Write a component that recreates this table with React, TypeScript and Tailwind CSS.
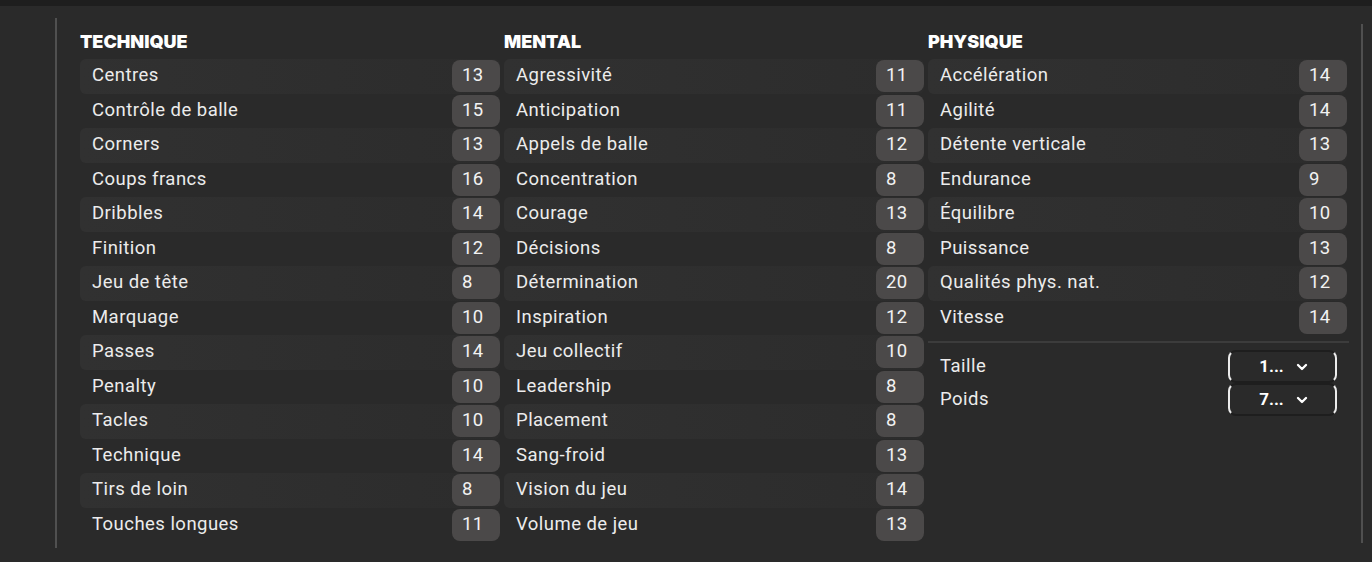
import React from 'react'
import { ChevronDown } from 'lucide-react'

type Attr = [string, number]

const technique: Attr[] = [
  ['Centres', 13],
  ['Contrôle de balle', 15],
  ['Corners', 13],
  ['Coups francs', 16],
  ['Dribbles', 14],
  ['Finition', 12],
  ['Jeu de tête', 8],
  ['Marquage', 10],
  ['Passes', 14],
  ['Penalty', 10],
  ['Tacles', 10],
  ['Technique', 14],
  ['Tirs de loin', 8],
  ['Touches longues', 11],
]

const mental: Attr[] = [
  ['Agressivité', 11],
  ['Anticipation', 11],
  ['Appels de balle', 12],
  ['Concentration', 8],
  ['Courage', 13],
  ['Décisions', 8],
  ['Détermination', 20],
  ['Inspiration', 12],
  ['Jeu collectif', 10],
  ['Leadership', 8],
  ['Placement', 8],
  ['Sang-froid', 13],
  ['Vision du jeu', 14],
  ['Volume de jeu', 13],
]

const physique: Attr[] = [
  ['Accélération', 14],
  ['Agilité', 14],
  ['Détente verticale', 13],
  ['Endurance', 9],
  ['Équilibre', 10],
  ['Puissance', 13],
  ['Qualités phys. nat.', 12],
  ['Vitesse', 14],
]

const Row = ({ label, value, odd }: { label: string; value: number; odd: boolean }) => (
  <div
    className={`flex items-center h-[34.5px] rounded-md ${
      odd ? 'bg-gradient-to-r from-[#313131] to-[#2c2c2c]' : ''
    }`}
  >
    <span className="flex-1 pl-3 text-[18.5px] tracking-[0.025em] text-[#ececec]">{label}</span>
    <span className="w-12 h-8 rounded-lg bg-[#4b4949] flex items-center pl-2.5 text-[18.5px] tracking-[0.02em] text-[#f2f2f2]">
      {value}
    </span>
  </div>
)

const Header = ({ title }: { title: string }) => (
  <div className="h-[25px] mb-[5px] flex items-center text-[18px] font-black text-white font-['Inter',sans-serif]">
    {title}
  </div>
)

const Column = ({ title, items }: { title: string; items: Attr[] }) => (
  <div className="flex flex-col">
    <Header title={title} />
    {items.map(([label, value], i) => (
      <Row key={label} label={label} value={value} odd={i % 2 === 0} />
    ))}
  </div>
)

const Select = ({ value }: { value: string }) => (
  <div className="w-[109px] h-[33px] rounded-lg border-2 border-x-[#ececec] border-y-[#1e1e1e] flex items-center justify-center gap-2.5 pl-1">
    <span className="text-[17px] font-bold text-white">{value}</span>
    <ChevronDown size={16} strokeWidth={3.5} className="text-white" />
  </div>
)

const App = () => {
  return (
    <div className="w-[1372px] h-[562px] bg-[#2a2a2a] flex flex-col font-['Roboto',sans-serif] overflow-hidden">
      <div className="h-[6px] bg-[#1e1e1e]" />
      <div className="flex flex-1">
        <div className="ml-[55px] mt-[12px] w-[2px] h-[530px] bg-[#505050]" />
        <div className="ml-[23px] mt-[23px] grid grid-cols-[420px_420px_419px] gap-x-[4px]">
          <Column title="TECHNIQUE" items={technique} />
          <Column title="MENTAL" items={mental} />
          <div className="flex flex-col">
            <Header title="PHYSIQUE" />
            {physique.map(([label, value], i) => (
              <Row key={label} label={label} value={value} odd={i % 2 === 0} />
            ))}
            <div className="mt-[6px] h-[2px] w-[421px] bg-[#3c3c3c]" />
            <div className="mt-[7px] flex flex-col">
              <div className="flex items-center pr-[10px]">
                <span className="flex-1 pl-3 text-[18.5px] tracking-[0.025em] text-[#ececec]">Taille</span>
                <Select value="1..." />
              </div>
              <div className="flex items-center pr-[10px]">
                <span className="flex-1 pl-3 text-[18.5px] tracking-[0.025em] text-[#ececec]">Poids</span>
                <Select value="7..." />
              </div>
            </div>
          </div>
        </div>
        <div className="ml-[14px] mt-[18px] w-[2px] h-[519px] bg-[#505050]" />
      </div>
    </div>
  )
}

export default App
